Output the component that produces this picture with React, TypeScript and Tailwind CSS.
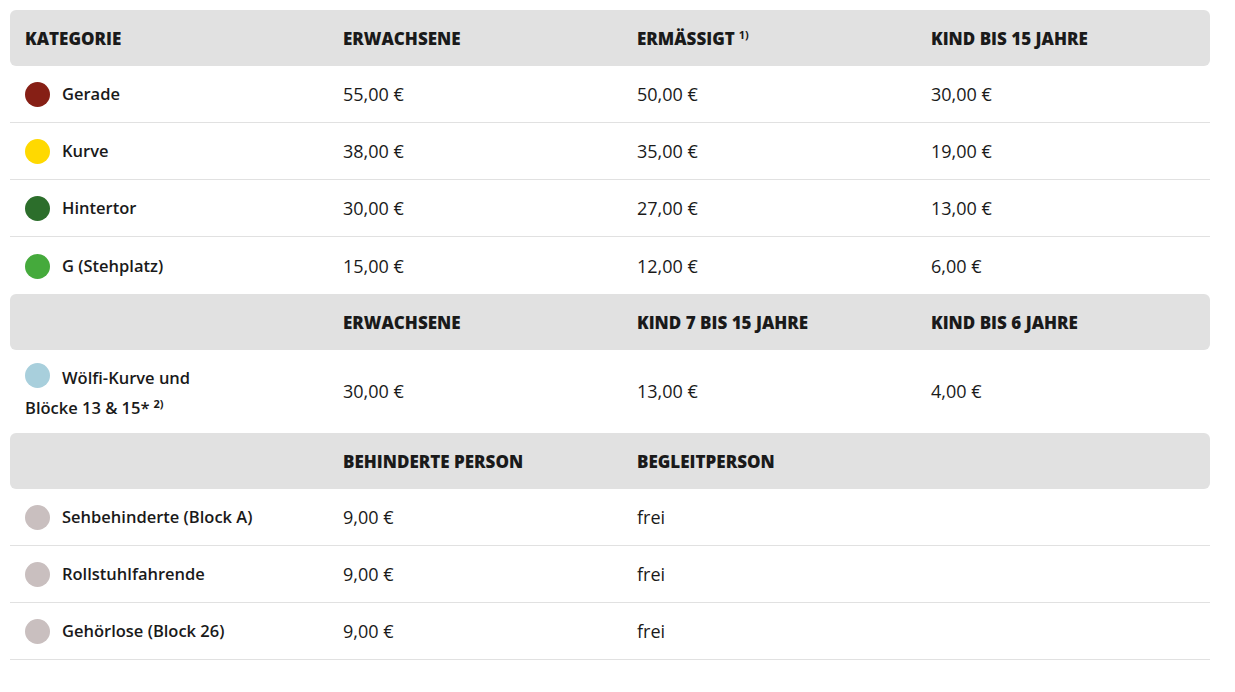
const cols = "grid grid-cols-[318px_294px_294px_294px]";

type Row = { name: React.ReactNode; color: string; prices: string[] };

const top: Row[] = [
  { name: "Gerade", color: "bg-[#861f15]", prices: ["55,00 €", "50,00 €", "30,00 €"] },
  { name: "Kurve", color: "bg-[#ffd900]", prices: ["38,00 €", "35,00 €", "19,00 €"] },
  { name: "Hintertor", color: "bg-[#2c6e2b]", prices: ["30,00 €", "27,00 €", "13,00 €"] },
  { name: "G (Stehplatz)", color: "bg-[#45aa3c]", prices: ["15,00 €", "12,00 €", "6,00 €"] },
];

const access: Row[] = [
  { name: "Sehbehinderte (Block A)", color: "bg-[#c9bfbf]", prices: ["9,00 €", "frei", ""] },
  { name: "Rollstuhlfahrende", color: "bg-[#c9bfbf]", prices: ["9,00 €", "frei", ""] },
  { name: "Gehörlose (Block 26)", color: "bg-[#c9bfbf]", prices: ["9,00 €", "frei", ""] },
];

function Sup({ children }: { children: React.ReactNode }) {
  return <sup className="ml-1 text-[11px] font-bold">{children}</sup>;
}

function Head({ cells }: { cells: React.ReactNode[] }) {
  return (
    <div className={`${cols} h-[56px] items-center rounded-md bg-[#e1e1e1] pt-px text-[17px] font-extrabold uppercase`}>
      {cells.map((c, i) => (
        <div key={i} className="px-[15px]">
          {c}
        </div>
      ))}
    </div>
  );
}

function Dot({ color }: { color: string }) {
  return <span className={`inline-block size-[25px] shrink-0 rounded-full ${color}`} />;
}

function PriceRow({ row, last }: { row: Row; last?: boolean }) {
  return (
    <div className={`${cols} h-[57px] items-center pt-px ${last ? "" : "border-b border-[#e1e1e1]"}`}>
      <div className="flex items-center gap-3 px-[15px] text-[16.5px] font-semibold">
        <Dot color={row.color} />
        <span>{row.name}</span>
      </div>
      {row.prices.map((p, i) => (
        <div key={i} className="px-[15px] text-[18px]">
          {p}
        </div>
      ))}
    </div>
  );
}

export default function App() {
  return (
    <div className="bg-white p-[10px] font-['Open_Sans',sans-serif] text-[16px] text-[#1a1a1a]">
      <div className="w-[1200px]">
        <Head
          cells={[
            "Kategorie",
            "Erwachsene",
            <>
              Ermässigt<Sup>1)</Sup>
            </>,
            "Kind bis 15 Jahre",
          ]}
        />
        {top.map((r, i) => (
          <PriceRow key={r.name as string} row={r} last={i === top.length - 1} />
        ))}

        <Head cells={["", "Erwachsene", "Kind 7 bis 15 Jahre", "Kind bis 6 Jahre"]} />
        <div className={`${cols} h-[83px] items-center text-[18px]`}>
          <div className="px-[15px] text-[16.5px] font-semibold leading-[26px]">
            <Dot color="bg-[#a8cfdc]" />
            <span className="ml-3 align-[4px]">Wölfi-Kurve und</span>
            <br />
            Blöcke 13 &amp; 15*<Sup>2)</Sup>
          </div>
          <div className="px-[15px]">30,00 €</div>
          <div className="px-[15px]">13,00 €</div>
          <div className="px-[15px]">4,00 €</div>
        </div>

        <Head cells={["", "Behinderte Person", "Begleitperson", ""]} />
        {access.map((r) => (
          <PriceRow key={r.name as string} row={r} />
        ))}
      </div>
    </div>
  );
}
